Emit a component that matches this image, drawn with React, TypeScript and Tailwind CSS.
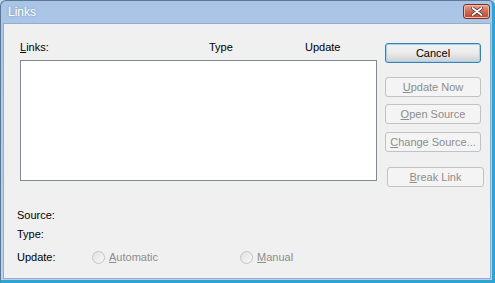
import React from 'react'

const font = { fontFamily: '"Liberation Sans", Arial, sans-serif' }

function Btn({
  children,
  disabled,
  className = '',
}: {
  children: React.ReactNode
  disabled?: boolean
  className?: string
}) {
  // Classic Win7 push button; the default one gets a blue rim
  return (
    <div
      className={
        'h-[20px] flex items-center justify-center rounded-[3px] text-[11px] ' +
        (disabled
          ? 'border border-[#bfc3c6] bg-[#f4f4f4] text-[#8d8d8d] '
          : 'border border-[#3c7fb1] bg-gradient-to-b from-[#f2f2f2] via-[#ebebeb] to-[#cfcfcf] text-black shadow-[inset_0_0_0_1px_#9fd3f5] ') +
        className
      }
    >
      {children}
    </div>
  )
}

function Radio({ label, mnemonic }: { label: string; mnemonic: string }) {
  return (
    <div className="flex items-center text-[11px] text-[#8d8d8d]">
      <span className="w-[13px] h-[13px] rounded-full border border-[#c4c4c4] bg-gradient-to-br from-[#e2e2e2] to-[#f7f7f7] mr-[4px]" />
      <span>
        <span className="underline">{mnemonic}</span>
        {label.slice(1)}
      </span>
    </div>
  )
}

export default function App() {
  return (
    <div className="w-[495px] h-[283px] bg-[#c3d6ec]" style={font}>
      <div className="w-full h-full flex flex-col rounded-t-[6px] border border-[#5b7797] border-r-[#2ea3d6] border-b-[#2ea3d6] border-b-[3px] border-r-[3px] bg-gradient-to-b from-[#a9c5e6] to-[#bcd2ec]">
        {/* title bar */}
        <div className="h-[22px] flex items-center justify-between pl-[7px] pr-[2px] shrink-0">
          <span className="text-white text-[12px] [text-shadow:0_0_3px_#6f8fb5]">Links</span>
          <div className="w-[27px] h-[15px] mt-[-1px] rounded-[3px] border border-[#7a3426] bg-gradient-to-b from-[#e6a595] via-[#cf6a52] to-[#c2442b] flex items-center justify-center shadow-[inset_0_0_0_1px_#eeb7a9]">
            <svg width="12" height="9" viewBox="0 0 12 9">
              <path d="M1.5 1 L10.5 8 M10.5 1 L1.5 8" stroke="#4a2a24" strokeWidth="3.2" strokeLinecap="round" />
              <path d="M1.5 1 L10.5 8 M10.5 1 L1.5 8" stroke="#ffffff" strokeWidth="1.8" strokeLinecap="round" />
            </svg>
          </div>
        </div>

        {/* client area */}
        <div className="flex-1 ml-[2px] mr-[1px] mb-[1px] bg-[#f0f0f0] border border-[#93acc9] text-[11px] text-black">
          <div className="flex pl-[16px] pt-[17px]">
            <div className="w-[357px]">
              <div className="grid grid-cols-[189px_96px_auto] h-[13px] leading-[13px]">
                <span>
                  <span className="underline">L</span>inks:
                </span>
                <span>Type</span>
                <span>Update</span>
              </div>
              <div className="mt-[6px] h-[121px] bg-white border border-[#828790]" />
            </div>
            <div className="ml-[8px] mt-[2px] w-[97px] flex flex-col">
              <Btn className="w-[96px]">Cancel</Btn>
              <Btn disabled className="w-[96px] mt-[14px]">
                <span className="underline">U</span>pdate Now
              </Btn>
              <Btn disabled className="w-[96px] mt-[7px]">
                <span className="underline">O</span>pen Source
              </Btn>
              <Btn disabled className="w-[96px] mt-[8px]">
                <span className="underline">C</span>hange Source...
              </Btn>
              <Btn disabled className="w-[97px] mt-[15px] ml-[2px]">
                <span className="underline">B</span>reak Link
              </Btn>
            </div>
          </div>

          <div className="pl-[13px] mt-[22px] flex flex-col leading-[13px]">
            <span>Source:</span>
            <span className="mt-[6px]">Type:</span>
            <div className="mt-[10px] flex items-center">
              <span className="w-[75px]">Update:</span>
              <div className="w-[148px]">
                <Radio label="Automatic" mnemonic="A" />
              </div>
              <Radio label="Manual" mnemonic="M" />
            </div>
          </div>
        </div>
      </div>
    </div>
  )
}
